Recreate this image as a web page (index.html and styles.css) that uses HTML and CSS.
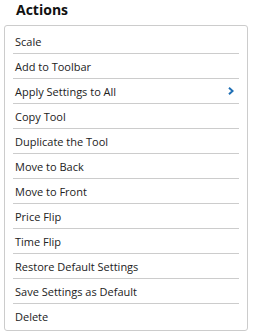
FILE: index.html
```html
<!DOCTYPE html>
<html lang="en">
<head>
  <meta charset="UTF-8" />
  <title>Actions</title>
  <link rel="stylesheet" href="styles.css">
</head>
<body>
  <h2 class="title">Actions</h2>
  <ul class="menu">
    <li>Scale</li>
    <li>Add to Toolbar</li>
    <li class="sub">Apply Settings to All
      <svg class="chev" width="6" height="8" viewBox="0 0 6 8"><path d="M1 0.8 L4.6 4 L1 7.2" fill="none" stroke="#1f6fb5" stroke-width="2"/></svg>
    </li>
    <li>Copy Tool</li>
    <li>Duplicate the Tool</li>
    <li>Move to Back</li>
    <li>Move to Front</li>
    <li>Price Flip</li>
    <li>Time Flip</li>
    <li>Restore Default Settings</li>
    <li>Save Settings as Default</li>
    <li>Delete</li>
  </ul>
</body>
</html>
```

FILE: styles.css
```css
body {
  margin: 0;
  padding: 0 4px;
  font-family: 'Open Sans', sans-serif;
  background: #fff;
  color: #222;
}

.title {
  margin: 0;
  padding: 0 0 0 12px;
  height: 25px;
  line-height: 19px;
  font-size: 14px;
  font-weight: 700;
  color: #111;
}

.menu {
  list-style: none;
  margin: 0;
  padding: 3px 8px 2px;
  border: 1px solid #ccc;
  border-radius: 3px;
  width: 244px;
  box-sizing: border-box;
}

.menu li {
  display: flex;
  align-items: center;
  justify-content: space-between;
  height: 24px;
  padding: 0 0 0 2px;
  font-size: 11px;
  border-bottom: 1px solid #ccc;
}

.menu li:last-child {
  border-bottom: none;
}

.chev {
  margin-right: 5px;
}
```
